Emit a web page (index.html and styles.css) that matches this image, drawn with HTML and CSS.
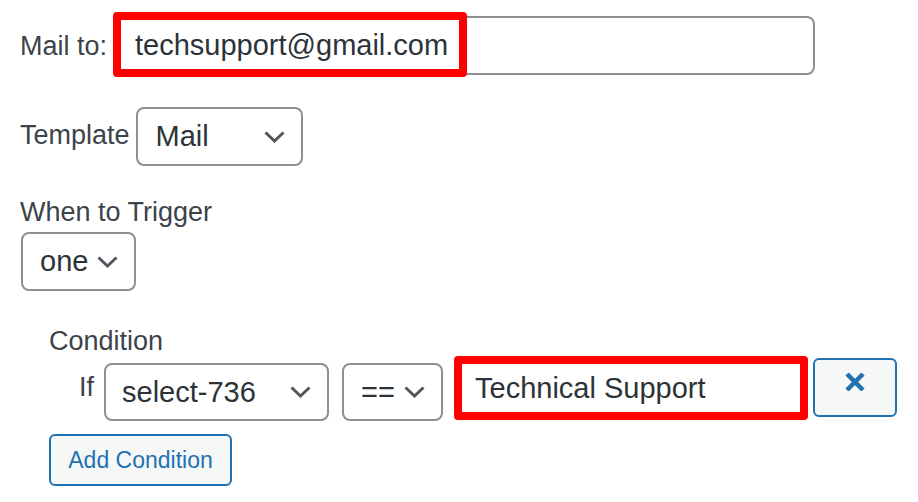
FILE: index.html
```html
<!DOCTYPE html>
<html>
<head>
<meta charset="utf-8">
<link rel="stylesheet" href="styles.css">
</head>
<body>
<div class="form">
  <div class="row row-mail">
    <label class="lbl">Mail to:</label>
    <div class="field-wrap">
      <div class="text-input mail-input">techsupport@gmail.com</div>
      <span class="highlight hl-mail"></span>
    </div>
  </div>

  <div class="row row-template">
    <label class="lbl">Template</label>
    <div class="select sel-template"><span>Mail</span><svg class="chev" viewBox="0 0 21 12"><path d="M1.5 1.5 L10.5 10 L19.5 1.5" /></svg></div>
  </div>

  <div class="block-trigger">
    <label class="lbl">When to Trigger</label>
    <div class="select sel-one"><span>one</span><svg class="chev" viewBox="0 0 21 12"><path d="M1.5 1.5 L10.5 10 L19.5 1.5" /></svg></div>
  </div>

  <div class="condition">
    <div class="lbl cond-title">Condition</div>
    <div class="cond-row">
      <span class="lbl if">If</span>
      <div class="select sel-field"><span>select-736</span><svg class="chev" viewBox="0 0 21 12"><path d="M1.5 1.5 L10.5 10 L19.5 1.5" /></svg></div>
      <div class="select sel-op"><span>==</span><svg class="chev" viewBox="0 0 21 12"><path d="M1.5 1.5 L10.5 10 L19.5 1.5" /></svg></div>
      <div class="field-wrap">
        <div class="text-input value-input">Technical Support</div>
        <span class="highlight hl-value"></span>
      </div>
      <button class="btn btn-remove" type="button"><svg class="x" viewBox="0 0 20 18"><path d="M2 1 L18 17 M18 1 L2 17" /></svg></button>
    </div>
    <button class="btn btn-add" type="button">Add Condition</button>
  </div>
</div>
</body>
</html>
```

FILE: styles.css
```css
html, body {
  margin: 0;
  padding: 0;
  background: #ffffff;
}
body {
  font-family: "Liberation Sans", Arial, sans-serif;
  color: #3c434a;
}
.form {
  padding: 16px 0 0 20px;
}
.row {
  display: flex;
  align-items: center;
}
.lbl {
  font-size: 27px;
  line-height: 30px;
  color: #3c434a;
}
.row-mail .lbl {
  margin-right: 7px;
}
.field-wrap {
  position: relative;
}
.text-input {
  box-sizing: border-box;
  border: 2px solid #8c8f94;
  border-radius: 8px;
  background: #fff;
  color: #2c3338;
  font-size: 29px;
  display: flex;
  align-items: center;
  padding-left: 19px;
}
.mail-input {
  width: 701px;
  height: 59px;
}
.highlight {
  position: absolute;
  border: 8px solid #ff0000;
  border-radius: 4px;
  box-sizing: border-box;
  pointer-events: none;
}
.hl-mail {
  left: -1px;
  top: -4px;
  width: 354px;
  height: 65px;
}
.select {
  box-sizing: border-box;
  height: 59px;
  border: 2px solid #8c8f94;
  border-radius: 8px;
  background: #fff;
  color: #2c3338;
  font-size: 29px;
  display: flex;
  align-items: center;
  justify-content: space-between;
  padding: 0 16px 0 18px;
}
.chev {
  width: 21px;
  height: 12px;
  flex: none;
}
.chev path {
  fill: none;
  stroke: #50575e;
  stroke-width: 3;
}
.row-template {
  margin-top: 32px;
}
.row-template .lbl {
  margin-right: 6px;
  margin-top: -4px;
}
.sel-template {
  width: 167px;
}
.block-trigger {
  margin-top: 31px;
}
.block-trigger .lbl {
  display: block;
}
.sel-one {
  margin-top: 5px;
  margin-left: 1px;
  width: 115px;
  padding: 0 16px 0 17px;
}
.condition {
  margin-top: 35px;
  padding-left: 29px;
}
.cond-title {
  display: block;
}
.cond-row {
  display: flex;
  align-items: flex-start;
  margin-top: 0;
}
.if {
  margin-left: 30px;
  margin-top: 16px;
  width: 25px;
}
.sel-field {
  margin-top: 7px;
  width: 225px;
  height: 58px;
  padding: 0 16px 0 16px;
}
.sel-op {
  margin-top: 7px;
  margin-left: 13px;
  width: 101px;
  height: 58px;
  padding: 0 16px 0 17px;
}
.cond-row .field-wrap {
  margin-left: 13px;
  margin-top: 2px;
}
.value-input {
  width: 350px;
  height: 60px;
  padding-left: 17px;
}
.hl-value {
  left: -2px;
  top: -2px;
  width: 354px;
  height: 64px;
}
.btn {
  box-sizing: border-box;
  border: 2px solid #2271b1;
  border-radius: 6px;
  background: #f6f7f7;
  color: #2271b1;
  font-family: "Liberation Sans", Arial, sans-serif;
  cursor: pointer;
  padding: 0;
}
.btn-remove {
  margin-left: 7px;
  margin-top: 2px;
  width: 84px;
  height: 59px;
  display: flex;
  justify-content: center;
  align-items: flex-start;
  padding-top: 13px;
}
.x {
  width: 20px;
  height: 18px;
}
.x path {
  fill: none;
  stroke: #2271b1;
  stroke-width: 4.5;
}
.btn-add {
  display: block;
  margin-top: 13px;
  width: 183px;
  height: 52px;
  font-size: 23px;
  line-height: 1;
}
```
